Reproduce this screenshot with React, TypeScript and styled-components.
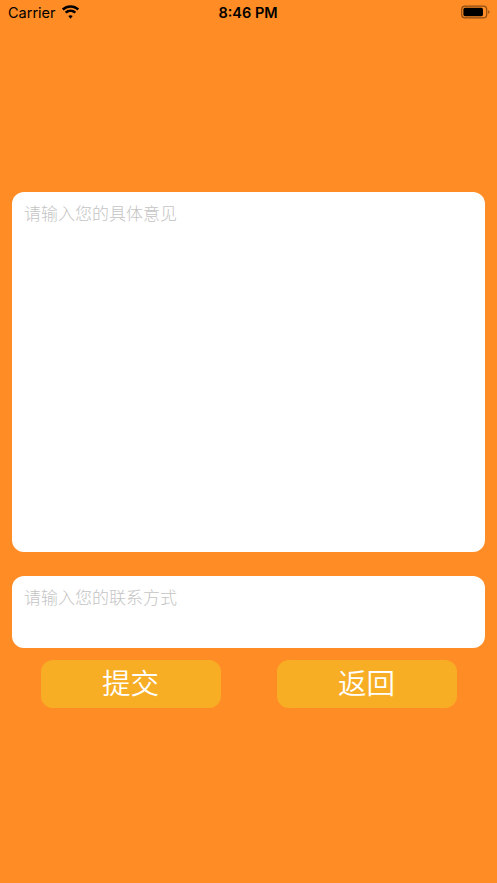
import { createGlobalStyle } from "styled-components";
import styled from "styled-components";

const GlobalStyle = createGlobalStyle`
  html, body {
    margin: 0;
    padding: 0;
    background: #ff8c24;
  }
  * {
    box-sizing: border-box;
  }
`;

const Page = styled.div`
  width: 497px;
  height: 883px;
  background: #ff8c24;
  display: flex;
  flex-direction: column;
  font-family: "Liberation Sans", "Noto Sans CJK SC", sans-serif;
  overflow: hidden;
`;

const StatusBar = styled.div`
  height: 27px;
  flex: none;
  display: grid;
  grid-template-columns: 1fr auto 1fr;
  align-items: center;
  padding: 0 7px 3px 8px;
  color: #000;
`;

const StatusLeft = styled.div`
  display: flex;
  align-items: center;
  gap: 5px;
  font-family: Inter, "Liberation Sans", sans-serif;
  font-size: 14.5px;
`;

const Time = styled.div`
  font-family: Inter, "Liberation Sans", sans-serif;
  font-size: 14.5px;
  font-weight: 600;
  transform: translateX(-1px);
`;

const StatusRight = styled.div`
  display: flex;
  justify-content: flex-end;
`;

const Form = styled.div`
  display: flex;
  flex-direction: column;
  padding: 165px 12px 0;
`;

const Field = styled.div<{ $height: number; $gap?: number }>`
  height: ${({ $height }) => $height}px;
  margin-top: ${({ $gap }) => $gap || 0}px;
  background: #fff;
  border-radius: 12px;
  padding: 11px 12px;
  font-size: 17px;
  line-height: 20px;
  color: #c4c4c4;
  font-family: "Noto Sans CJK SC", sans-serif;
  font-weight: 300;
`;

const Buttons = styled.div`
  display: flex;
  justify-content: space-between;
  margin-top: 12px;
  padding: 0 28px 0 29px;
`;

const ActionButton = styled.button`
  width: 180px;
  height: 48px;
  border: 0;
  padding: 0 1px 5px 0;
  border-radius: 12px;
  background: #f7ae24;
  color: #fff;
  font-family: "Noto Sans CJK SC", sans-serif;
  font-size: 28.5px;
  font-weight: 350;
`;

function WifiIcon() {
  return (
    <svg width="19" height="14" viewBox="0 0 19 14">
      <path d="M9.5 2.7c2.6 0 5 1 6.9 2.7l1.7-1.8A12.6 12.6 0 0 0 9.5.2 12.6 12.6 0 0 0 .9 3.6l1.7 1.8a10.1 10.1 0 0 1 6.9-2.7z" />
      <path d="M9.5 7c1.5 0 2.9.6 4 1.5l1.7-1.8a8.4 8.4 0 0 0-11.4 0l1.7 1.8c1.1-.9 2.5-1.5 4-1.5z" />
      <path d="M9.5 10.3c-.9 0-1.6.3-2.2.8l2.2 2.6 2.2-2.6c-.6-.5-1.3-.8-2.2-.8z" />
    </svg>
  );
}

function BatteryIcon() {
  return (
    <svg width="29" height="14" viewBox="0 0 29 14">
      <rect x="0.7" y="1.2" width="25" height="11.6" rx="3.4" fill="none" stroke="#000" strokeOpacity="0.45" strokeWidth="1.2" />
      <rect x="2.4" y="2.8" width="19.6" height="8.4" rx="1.6" fill="#000" />
      <path d="M27.2 5.2c.8.3 1.3 1 1.3 1.8s-.5 1.5-1.3 1.8z" fill="#000" fillOpacity="0.45" />
    </svg>
  );
}

export default function App() {
  return (
    <Page>
      <GlobalStyle />
      <StatusBar>
        <StatusLeft>
          Carrier
          <WifiIcon />
        </StatusLeft>
        <Time>8:46 PM</Time>
        <StatusRight>
          <BatteryIcon />
        </StatusRight>
      </StatusBar>
      <Form>
        <Field $height={360}>请输入您的具体意见</Field>
        <Field $height={72} $gap={24}>请输入您的联系方式</Field>
        <Buttons>
          <ActionButton>提交</ActionButton>
          <ActionButton>返回</ActionButton>
        </Buttons>
      </Form>
    </Page>
  );
}
